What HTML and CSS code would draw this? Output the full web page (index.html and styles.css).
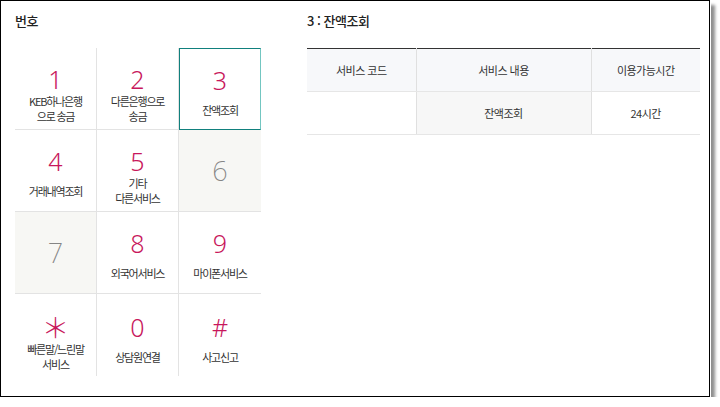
FILE: index.html
```html
<!DOCTYPE html>
<html lang="ko">
<head>
<meta charset="utf-8">
<link rel="stylesheet" href="styles.css">
</head>
<body>
<div class="frame">
  <section class="left">
    <h2 class="title">번호</h2>
    <div class="pad">
      <div class="key"><span class="num">1</span><span class="lbl">KEB하나은행<br>으로 송금</span></div>
      <div class="key"><span class="num">2</span><span class="lbl">다른은행으로<br>송금</span></div>
      <div class="key sel"><span class="num">3</span><span class="lbl">잔액조회</span></div>
      <div class="key"><span class="num">4</span><span class="lbl">거래내역조회</span></div>
      <div class="key"><span class="num">5</span><span class="lbl">기타<br>다른서비스</span></div>
      <div class="key off"><span class="num">6</span></div>
      <div class="key off"><span class="num">7</span></div>
      <div class="key"><span class="num">8</span><span class="lbl">외국어서비스</span></div>
      <div class="key"><span class="num">9</span><span class="lbl">마이폰서비스</span></div>
      <div class="key last"><span class="num star">＊</span><span class="lbl">빠른말/느린말<br>서비스</span></div>
      <div class="key last"><span class="num">0</span><span class="lbl">상담원연결</span></div>
      <div class="key last"><span class="num">#</span><span class="lbl">사고신고</span></div>
    </div>
  </section>
  <section class="right">
    <h2 class="title">3 : 잔액조회</h2>
    <table class="svc">
      <thead>
        <tr><th>서비스 코드</th><th>서비스 내용</th><th>이용가능시간</th></tr>
      </thead>
      <tbody>
        <tr><td></td><td class="shade">잔액조회</td><td>24시간</td></tr>
      </tbody>
    </table>
  </section>
</div>
</body>
</html>
```
FILE: styles.css
```css
* { box-sizing: border-box; }
html, body { margin: 0; padding: 0; background: #fff; }
body { font-family: "Noto Sans CJK KR", "Noto Sans", sans-serif; color: #333; }

.frame {
  width: 710px;
  height: 397px;
  border: 1px solid #000;
  background: #fff;
  box-shadow: 1px 1px 0 #fff, 5px 5px 3px #8f8f8f;
  display: flex;
  padding: 12px 9px 0 14px;
}

.title {
  margin: 0 0 19px;
  font-size: 13px;
  line-height: 16px;
  font-weight: 500;
  color: #222;
  letter-spacing: -0.5px;
}

.left { width: 246px; flex: none; }
.right { margin-left: 46px; flex: 1; }

.pad {
  display: grid;
  grid-template-columns: repeat(3, 82px);
  grid-auto-rows: 82px;
}

.key {
  display: flex;
  flex-direction: column;
  align-items: center;
  padding-top: 17px;
  border-right: 1px solid #e3e3e3;
  border-bottom: 1px solid #e3e3e3;
}
.key:nth-child(3n) { border-right: none; }
.key.last { border-bottom: none; padding-top: 19px; }

.key.sel {
  border: 1px solid #11807d;
  border-right-color: #73c6c1;
}

.num {
  font-family: "Noto Sans", sans-serif;
  font-weight: 300;
  font-size: 25px;
  line-height: 28px;
  height: 28px;
  color: #c8175c;
}
.num.star {
  font-family: "Noto Sans CJK KR", sans-serif;
  font-weight: 300;
  font-size: 28px;
  line-height: 28px;
}

.lbl {
  margin-top: 1px;
  height: 30px;
  display: flex;
  align-items: center;
  text-align: center;
  font-size: 11px;
  line-height: 15px;
  letter-spacing: -1.2px;
  color: #333;
}

.key.off {
  background: #f7f7f4;
  justify-content: center;
  padding-top: 0;
}
.key.off .num {
  color: #858585;
  font-weight: 200;
  font-size: 27px;
  line-height: 30px;
  height: 30px;
}

.svc {
  width: 393px;
  border-collapse: collapse;
  table-layout: fixed;
  font-size: 11px;
  letter-spacing: -0.5px;
  color: #333;
}
.svc th, .svc td {
  height: 43px;
  padding: 0;
  text-align: center;
  font-weight: 400;
  border-bottom: 1px solid #e6e6e6;
  border-left: 1px solid #e0e0e0;
}
.svc th:first-child, .svc td:first-child { border-left: none; }
.svc th:nth-child(1) { width: 109px; }
.svc th:nth-child(2) { width: 175px; }
.svc thead tr { border-top: 1px solid #333; }
.svc th { background: #f7f8fa; }
.svc td.shade { background: #f7f7f7; }
```
